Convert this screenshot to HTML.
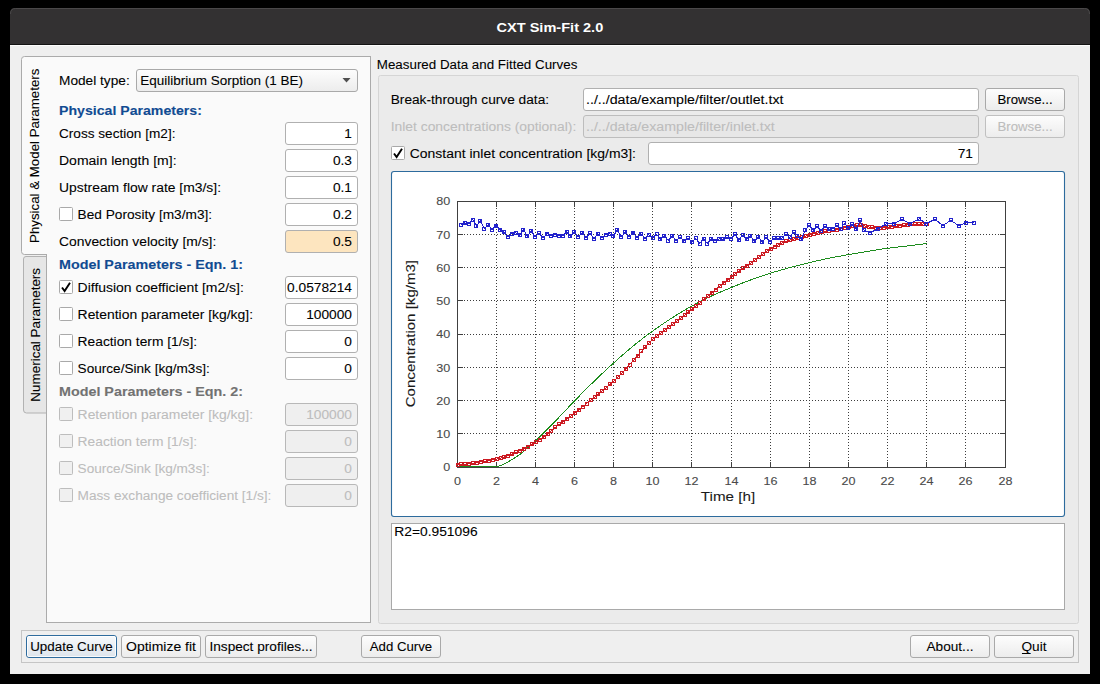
<!DOCTYPE html>
<html><head><meta charset="utf-8"><title>CXT Sim-Fit 2.0</title>
<style>html,body{margin:0;padding:0;background:#000;width:1100px;height:684px;overflow:hidden}svg{display:block}text{font-family:"Liberation Sans",sans-serif}</style>
</head><body>
<svg width="1100" height="684" viewBox="0 0 1100 684" font-family="Liberation Sans, sans-serif"><rect x="0" y="0" width="1100" height="684" fill="#000"/>
<rect x="10" y="40" width="1080" height="634" fill="#efefef"/>
<path d="M10,44 L10,13 Q10,8 15,8 L1085,8 Q1090,8 1090,13 L1090,44 Z" fill="#333132"/>
<path d="M10.5,14 Q10.5,8.5 15.5,8.5 L1084.5,8.5 Q1089.5,8.5 1089.5,14" fill="none" stroke="#4a4849" stroke-width="1"/>
<rect x="10" y="44" width="1080" height="1" fill="#141414"/>
<rect x="10" y="45" width="1080" height="1" fill="#fdfdfd"/>
<text x="496.53" y="32.00" font-size="13.40" font-weight="bold" fill="#ffffff" textLength="106.75" lengthAdjust="spacingAndGlyphs">CXT Sim-Fit 2.0</text>
<path d="M46,256.5 L26,256.5 Q23.5,256.5 23.5,259 L23.5,410 Q23.5,413 26.5,413 L46,413" fill="#e6e6e6" stroke="#b2b2b2" stroke-width="1"/>
<rect x="46.5" y="56.5" width="324" height="566" fill="#fafafa" stroke="#ababab" stroke-width="1"/>
<path d="M47,56.5 L24.5,56.5 Q21.5,56.5 21.5,59.5 L21.5,251.5 Q21.5,254.5 24.5,254.5 L47,254.5" fill="#fafafa" stroke="#ababab" stroke-width="1"/>
<rect x="46" y="57" width="2" height="197" fill="#fafafa"/>
<text x="-48.16" y="155.80" font-size="12.24" fill="#000" stroke="#000" stroke-width="0.08" textLength="174.33" lengthAdjust="spacingAndGlyphs" transform="rotate(-90 39.00 155.80)">Physical &amp; Model Parameters</text>
<text x="-26.85" y="334.80" font-size="12.24" fill="#000" stroke="#000" stroke-width="0.08" textLength="133.71" lengthAdjust="spacingAndGlyphs" transform="rotate(-90 40.00 334.80)">Numerical Parameters</text>
<text x="59.00" y="85.00" font-size="12.24" fill="#000" stroke="#000" stroke-width="0.08" textLength="70.69" lengthAdjust="spacingAndGlyphs">Model type:</text>
<defs><linearGradient id="btn" x1="0" y1="0" x2="0" y2="1"><stop offset="0" stop-color="#fdfdfd"/><stop offset="1" stop-color="#ececec"/></linearGradient><linearGradient id="btnd" x1="0" y1="0" x2="0" y2="1"><stop offset="0" stop-color="#f8fafc"/><stop offset="1" stop-color="#dde4eb"/></linearGradient></defs>
<rect x="136.5" y="69.5" width="221" height="22" rx="2.5" fill="url(#btn)" stroke="#a9a9a9" stroke-width="1"/>
<text x="140.30" y="85.00" font-size="12.24" fill="#000" stroke="#000" stroke-width="0.08" textLength="162.74" lengthAdjust="spacingAndGlyphs">Equilibrium Sorption (1 BE)</text>
<path d="M342.5,78 L350.5,78 L346.5,82.5 Z" fill="#505050"/>
<text x="59.00" y="115.00" font-size="12.24" font-weight="bold" fill="#114b92" stroke="#114b92" stroke-width="0.1" textLength="142.88" lengthAdjust="spacingAndGlyphs">Physical Parameters:</text>
<text x="59.00" y="138.00" font-size="12.24" fill="#000" stroke="#000" stroke-width="0.08" textLength="116.47" lengthAdjust="spacingAndGlyphs">Cross section [m2]:</text>
<rect x="285.5" y="122.5" width="72" height="22" rx="2.5" fill="#ffffff" stroke="#b0b0b0" stroke-width="1"/><text x="344.37" y="138.00" font-size="12.24" fill="#000" stroke="#000" stroke-width="0.08" textLength="7.63" lengthAdjust="spacingAndGlyphs">1</text>
<text x="59.00" y="165.00" font-size="12.24" fill="#000" stroke="#000" stroke-width="0.08" textLength="117.54" lengthAdjust="spacingAndGlyphs">Domain length [m]:</text>
<rect x="285.5" y="149.5" width="72" height="22" rx="2.5" fill="#ffffff" stroke="#b0b0b0" stroke-width="1"/><text x="332.92" y="165.00" font-size="12.24" fill="#000" stroke="#000" stroke-width="0.08" textLength="19.08" lengthAdjust="spacingAndGlyphs">0.3</text>
<text x="59.00" y="192.00" font-size="12.24" fill="#000" stroke="#000" stroke-width="0.08" textLength="162.01" lengthAdjust="spacingAndGlyphs">Upstream flow rate [m3/s]:</text>
<rect x="285.5" y="176.5" width="72" height="22" rx="2.5" fill="#ffffff" stroke="#b0b0b0" stroke-width="1"/><text x="332.92" y="192.00" font-size="12.24" fill="#000" stroke="#000" stroke-width="0.08" textLength="19.08" lengthAdjust="spacingAndGlyphs">0.1</text>
<rect x="59.5" y="207.5" width="13" height="13" rx="1" fill="#ffffff" stroke="#a9a9a9" stroke-width="1"/>
<text x="77.60" y="219.00" font-size="12.24" fill="#000" stroke="#000" stroke-width="0.08" textLength="134.51" lengthAdjust="spacingAndGlyphs">Bed Porosity [m3/m3]:</text>
<rect x="285.5" y="203.5" width="72" height="22" rx="2.5" fill="#ffffff" stroke="#b0b0b0" stroke-width="1"/><text x="332.92" y="219.00" font-size="12.24" fill="#000" stroke="#000" stroke-width="0.08" textLength="19.08" lengthAdjust="spacingAndGlyphs">0.2</text>
<text x="59.00" y="246.00" font-size="12.24" fill="#000" stroke="#000" stroke-width="0.08" textLength="157.31" lengthAdjust="spacingAndGlyphs">Convection velocity [m/s]:</text>
<rect x="285.5" y="230.5" width="72" height="22" rx="2.5" fill="#fde5bf" stroke="#b0b0b0" stroke-width="1"/><text x="332.92" y="246.00" font-size="12.24" fill="#000" stroke="#000" stroke-width="0.08" textLength="19.08" lengthAdjust="spacingAndGlyphs">0.5</text>
<text x="59.00" y="269.00" font-size="12.24" font-weight="bold" fill="#114b92" stroke="#114b92" stroke-width="0.1" textLength="183.92" lengthAdjust="spacingAndGlyphs">Model Parameters - Eqn. 1:</text>
<rect x="59.5" y="280.5" width="13" height="13" rx="1" fill="#ffffff" stroke="#a9a9a9" stroke-width="1"/><path d="M62,287.5 L64.6,291 L70,282.8" fill="none" stroke="#000" stroke-width="1.9" stroke-linecap="butt" stroke-linejoin="miter"/>
<text x="77.60" y="292.00" font-size="12.24" fill="#000" stroke="#000" stroke-width="0.08" textLength="166.18" lengthAdjust="spacingAndGlyphs">Diffusion coefficient [m2/s]:</text>
<rect x="285.5" y="276.5" width="72" height="22" rx="2.5" fill="#ffffff" stroke="#b0b0b0" stroke-width="1"/><text x="287.11" y="292.00" font-size="12.24" fill="#000" stroke="#000" stroke-width="0.08" textLength="64.89" lengthAdjust="spacingAndGlyphs">0.0578214</text>
<rect x="59.5" y="307.5" width="13" height="13" rx="1" fill="#ffffff" stroke="#a9a9a9" stroke-width="1"/>
<text x="77.60" y="319.00" font-size="12.24" fill="#000" stroke="#000" stroke-width="0.08" textLength="175.43" lengthAdjust="spacingAndGlyphs">Retention parameter [kg/kg]:</text>
<rect x="285.5" y="303.5" width="72" height="22" rx="2.5" fill="#ffffff" stroke="#b0b0b0" stroke-width="1"/><text x="306.19" y="319.00" font-size="12.24" fill="#000" stroke="#000" stroke-width="0.08" textLength="45.81" lengthAdjust="spacingAndGlyphs">100000</text>
<rect x="59.5" y="334.5" width="13" height="13" rx="1" fill="#ffffff" stroke="#a9a9a9" stroke-width="1"/>
<text x="77.60" y="346.00" font-size="12.24" fill="#000" stroke="#000" stroke-width="0.08" textLength="119.58" lengthAdjust="spacingAndGlyphs">Reaction term [1/s]:</text>
<rect x="285.5" y="330.5" width="72" height="22" rx="2.5" fill="#ffffff" stroke="#b0b0b0" stroke-width="1"/><text x="344.37" y="346.00" font-size="12.24" fill="#000" stroke="#000" stroke-width="0.08" textLength="7.63" lengthAdjust="spacingAndGlyphs">0</text>
<rect x="59.5" y="361.5" width="13" height="13" rx="1" fill="#ffffff" stroke="#a9a9a9" stroke-width="1"/>
<text x="77.60" y="373.00" font-size="12.24" fill="#000" stroke="#000" stroke-width="0.08" textLength="132.17" lengthAdjust="spacingAndGlyphs">Source/Sink [kg/m3s]:</text>
<rect x="285.5" y="357.5" width="72" height="22" rx="2.5" fill="#ffffff" stroke="#b0b0b0" stroke-width="1"/><text x="344.37" y="373.00" font-size="12.24" fill="#000" stroke="#000" stroke-width="0.08" textLength="7.63" lengthAdjust="spacingAndGlyphs">0</text>
<text x="59.00" y="396.00" font-size="12.24" font-weight="bold" fill="#727272" stroke="#727272" stroke-width="0.1" textLength="183.92" lengthAdjust="spacingAndGlyphs">Model Parameters - Eqn. 2:</text>
<rect x="59.5" y="407.5" width="13" height="13" rx="1" fill="#f0f0f0" stroke="#bdbdbd" stroke-width="1"/>
<text x="77.60" y="419.00" font-size="12.24" fill="#bdbdbd" stroke="#bdbdbd" stroke-width="0.08" textLength="175.43" lengthAdjust="spacingAndGlyphs">Retention parameter [kg/kg]:</text>
<rect x="285.5" y="403.5" width="72" height="22" rx="2.5" fill="#efefef" stroke="#b8b8b8" stroke-width="1"/><text x="306.19" y="419.00" font-size="12.24" fill="#bdbdbd" stroke="#bdbdbd" stroke-width="0.08" textLength="45.81" lengthAdjust="spacingAndGlyphs">100000</text>
<rect x="59.5" y="434.5" width="13" height="13" rx="1" fill="#f0f0f0" stroke="#bdbdbd" stroke-width="1"/>
<text x="77.60" y="446.00" font-size="12.24" fill="#bdbdbd" stroke="#bdbdbd" stroke-width="0.08" textLength="119.58" lengthAdjust="spacingAndGlyphs">Reaction term [1/s]:</text>
<rect x="285.5" y="430.5" width="72" height="22" rx="2.5" fill="#efefef" stroke="#b8b8b8" stroke-width="1"/><text x="344.37" y="446.00" font-size="12.24" fill="#bdbdbd" stroke="#bdbdbd" stroke-width="0.08" textLength="7.63" lengthAdjust="spacingAndGlyphs">0</text>
<rect x="59.5" y="461.5" width="13" height="13" rx="1" fill="#f0f0f0" stroke="#bdbdbd" stroke-width="1"/>
<text x="77.60" y="473.00" font-size="12.24" fill="#bdbdbd" stroke="#bdbdbd" stroke-width="0.08" textLength="132.17" lengthAdjust="spacingAndGlyphs">Source/Sink [kg/m3s]:</text>
<rect x="285.5" y="457.5" width="72" height="22" rx="2.5" fill="#efefef" stroke="#b8b8b8" stroke-width="1"/><text x="344.37" y="473.00" font-size="12.24" fill="#bdbdbd" stroke="#bdbdbd" stroke-width="0.08" textLength="7.63" lengthAdjust="spacingAndGlyphs">0</text>
<rect x="59.5" y="488.5" width="13" height="13" rx="1" fill="#f0f0f0" stroke="#bdbdbd" stroke-width="1"/>
<text x="77.60" y="500.00" font-size="12.24" fill="#bdbdbd" stroke="#bdbdbd" stroke-width="0.08" textLength="193.76" lengthAdjust="spacingAndGlyphs">Mass exchange coefficient [1/s]:</text>
<rect x="285.5" y="484.5" width="72" height="22" rx="2.5" fill="#efefef" stroke="#b8b8b8" stroke-width="1"/><text x="344.37" y="500.00" font-size="12.24" fill="#bdbdbd" stroke="#bdbdbd" stroke-width="0.08" textLength="7.63" lengthAdjust="spacingAndGlyphs">0</text>
<text x="376.80" y="69.00" font-size="12.24" fill="#000" stroke="#000" stroke-width="0.08" textLength="200.53" lengthAdjust="spacingAndGlyphs">Measured Data and Fitted Curves</text>
<rect x="378.5" y="75.5" width="700" height="548" rx="2" fill="#ebebeb" stroke="#d5d5d5" stroke-width="1"/>
<text x="390.70" y="104.00" font-size="12.24" fill="#000" stroke="#000" stroke-width="0.08" textLength="158.39" lengthAdjust="spacingAndGlyphs">Break-through curve data:</text>
<text x="390.70" y="131.00" font-size="12.24" fill="#bdbdbd" stroke="#bdbdbd" stroke-width="0.08" textLength="185.60" lengthAdjust="spacingAndGlyphs">Inlet concentrations (optional):</text>
<rect x="583.5" y="88.5" width="395" height="22" rx="2.5" fill="#ffffff" stroke="#b0b0b0" stroke-width="1"/><text x="586.00" y="104.00" font-size="12.24" fill="#000" stroke="#000" stroke-width="0.08" textLength="197.47" lengthAdjust="spacingAndGlyphs">../../data/example/filter/outlet.txt</text>
<rect x="583.5" y="115.5" width="395" height="22" rx="2.5" fill="#e7e7e7" stroke="#bdbdbd" stroke-width="1"/><text x="586.00" y="131.00" font-size="12.24" fill="#bdbdbd" stroke="#bdbdbd" stroke-width="0.08" textLength="188.76" lengthAdjust="spacingAndGlyphs">../../data/example/filter/inlet.txt</text>
<rect x="985.5" y="88.5" width="79" height="22" rx="2.5" fill="url(#btn)" stroke="#a9a9a9" stroke-width="1"/><text x="997.43" y="104.00" font-size="12.24" fill="#000" stroke="#000" stroke-width="0.08" textLength="55.14" lengthAdjust="spacingAndGlyphs">Browse...</text>
<rect x="985.5" y="115.5" width="79" height="22" rx="2.5" fill="url(#btn)" stroke="#c0c0c0" stroke-width="1"/><text x="997.43" y="131.00" font-size="12.24" fill="#bcbcbc" stroke="#bcbcbc" stroke-width="0.08" textLength="55.14" lengthAdjust="spacingAndGlyphs">Browse...</text>
<rect x="391.5" y="146.5" width="13" height="13" rx="1" fill="#ffffff" stroke="#a9a9a9" stroke-width="1"/><path d="M394,153.5 L396.6,157 L402,148.8" fill="none" stroke="#000" stroke-width="1.9" stroke-linecap="butt" stroke-linejoin="miter"/>
<text x="409.80" y="158.00" font-size="12.24" fill="#000" stroke="#000" stroke-width="0.08" textLength="226.20" lengthAdjust="spacingAndGlyphs">Constant inlet concentration [kg/m3]:</text>
<rect x="648.5" y="142.5" width="330" height="22" rx="2.5" fill="#ffffff" stroke="#b0b0b0" stroke-width="1"/><text x="957.73" y="158.00" font-size="12.24" fill="#000" stroke="#000" stroke-width="0.08" textLength="15.27" lengthAdjust="spacingAndGlyphs">71</text>
<rect x="391.5" y="171.5" width="673" height="345" rx="2.5" fill="#ffffff" stroke="#2d6b9d" stroke-width="1.1"/>
<rect x="391.5" y="523.5" width="673" height="86" fill="#ffffff" stroke="#a9a9a9" stroke-width="1"/>
<text x="394.30" y="536.00" font-size="12.24" fill="#000" stroke="#000" stroke-width="0.08" textLength="83.29" lengthAdjust="spacingAndGlyphs">R2=0.951096</text>
<rect x="21.5" y="630.5" width="1057" height="32" fill="none" stroke="#c5c5c5" stroke-width="1"/>
<rect x="26.5" y="635.5" width="90" height="22" rx="2.5" fill="url(#btnd)" stroke="#2f6c9e" stroke-width="1"/><rect x="27.5" y="636.5" width="88" height="20" rx="1.5" fill="none" stroke="#ffffff" stroke-width="1" opacity="0.8"/><text x="30.16" y="651.00" font-size="12.24" fill="#000" stroke="#000" stroke-width="0.08" textLength="82.68" lengthAdjust="spacingAndGlyphs">Update Curve</text>
<rect x="121.5" y="635.5" width="79" height="22" rx="2.5" fill="url(#btn)" stroke="#a9a9a9" stroke-width="1"/><text x="126.06" y="651.00" font-size="12.24" fill="#000" stroke="#000" stroke-width="0.08" textLength="69.89" lengthAdjust="spacingAndGlyphs">Optimize fit</text>
<rect x="205.5" y="635.5" width="111" height="22" rx="2.5" fill="url(#btn)" stroke="#a9a9a9" stroke-width="1"/><text x="209.44" y="651.00" font-size="12.24" fill="#000" stroke="#000" stroke-width="0.08" textLength="103.11" lengthAdjust="spacingAndGlyphs">Inspect profiles...</text>
<rect x="361.5" y="635.5" width="79" height="22" rx="2.5" fill="url(#btn)" stroke="#a9a9a9" stroke-width="1"/><text x="369.78" y="651.00" font-size="12.24" fill="#000" stroke="#000" stroke-width="0.08" textLength="62.45" lengthAdjust="spacingAndGlyphs">Add Curve</text>
<rect x="910.5" y="635.5" width="79" height="22" rx="2.5" fill="url(#btn)" stroke="#a9a9a9" stroke-width="1"/><text x="926.54" y="651.00" font-size="12.24" fill="#000" stroke="#000" stroke-width="0.08" textLength="46.92" lengthAdjust="spacingAndGlyphs">About...</text>
<rect x="994.5" y="635.5" width="79" height="22" rx="2.5" fill="url(#btn)" stroke="#a9a9a9" stroke-width="1"/><text x="1021.46" y="651.00" font-size="12.24" fill="#000" stroke="#000" stroke-width="0.08" textLength="25.09" lengthAdjust="spacingAndGlyphs">Quit</text>
<rect x="1021.96" y="653" width="8.45" height="1" fill="#000"/>
<g shape-rendering="crispEdges"><line x1="496.5" y1="202" x2="496.5" y2="467" stroke="#3c3c3c" stroke-width="1" stroke-dasharray="1 2"/><line x1="535.5" y1="202" x2="535.5" y2="467" stroke="#3c3c3c" stroke-width="1" stroke-dasharray="1 2"/><line x1="574.5" y1="202" x2="574.5" y2="467" stroke="#3c3c3c" stroke-width="1" stroke-dasharray="1 2"/><line x1="613.5" y1="202" x2="613.5" y2="467" stroke="#3c3c3c" stroke-width="1" stroke-dasharray="1 2"/><line x1="652.5" y1="202" x2="652.5" y2="467" stroke="#3c3c3c" stroke-width="1" stroke-dasharray="1 2"/><line x1="691.5" y1="202" x2="691.5" y2="467" stroke="#3c3c3c" stroke-width="1" stroke-dasharray="1 2"/><line x1="731.5" y1="202" x2="731.5" y2="467" stroke="#3c3c3c" stroke-width="1" stroke-dasharray="1 2"/><line x1="770.5" y1="202" x2="770.5" y2="467" stroke="#3c3c3c" stroke-width="1" stroke-dasharray="1 2"/><line x1="809.5" y1="202" x2="809.5" y2="467" stroke="#3c3c3c" stroke-width="1" stroke-dasharray="1 2"/><line x1="848.5" y1="202" x2="848.5" y2="467" stroke="#3c3c3c" stroke-width="1" stroke-dasharray="1 2"/><line x1="887.5" y1="202" x2="887.5" y2="467" stroke="#3c3c3c" stroke-width="1" stroke-dasharray="1 2"/><line x1="926.5" y1="202" x2="926.5" y2="467" stroke="#3c3c3c" stroke-width="1" stroke-dasharray="1 2"/><line x1="965.5" y1="202" x2="965.5" y2="467" stroke="#3c3c3c" stroke-width="1" stroke-dasharray="1 2"/><line x1="458" y1="433.5" x2="1005" y2="433.5" stroke="#3c3c3c" stroke-width="1" stroke-dasharray="1 2"/><line x1="458" y1="400.5" x2="1005" y2="400.5" stroke="#3c3c3c" stroke-width="1" stroke-dasharray="1 2"/><line x1="458" y1="367.5" x2="1005" y2="367.5" stroke="#3c3c3c" stroke-width="1" stroke-dasharray="1 2"/><line x1="458" y1="334.5" x2="1005" y2="334.5" stroke="#3c3c3c" stroke-width="1" stroke-dasharray="1 2"/><line x1="458" y1="300.5" x2="1005" y2="300.5" stroke="#3c3c3c" stroke-width="1" stroke-dasharray="1 2"/><line x1="458" y1="267.5" x2="1005" y2="267.5" stroke="#3c3c3c" stroke-width="1" stroke-dasharray="1 2"/><line x1="458" y1="234.5" x2="1005" y2="234.5" stroke="#3c3c3c" stroke-width="1" stroke-dasharray="1 2"/><line x1="496.5" y1="467" x2="496.5" y2="462" stroke="#404040" stroke-width="1"/><line x1="496.5" y1="202" x2="496.5" y2="207" stroke="#404040" stroke-width="1"/><line x1="535.5" y1="467" x2="535.5" y2="462" stroke="#404040" stroke-width="1"/><line x1="535.5" y1="202" x2="535.5" y2="207" stroke="#404040" stroke-width="1"/><line x1="574.5" y1="467" x2="574.5" y2="462" stroke="#404040" stroke-width="1"/><line x1="574.5" y1="202" x2="574.5" y2="207" stroke="#404040" stroke-width="1"/><line x1="613.5" y1="467" x2="613.5" y2="462" stroke="#404040" stroke-width="1"/><line x1="613.5" y1="202" x2="613.5" y2="207" stroke="#404040" stroke-width="1"/><line x1="652.5" y1="467" x2="652.5" y2="462" stroke="#404040" stroke-width="1"/><line x1="652.5" y1="202" x2="652.5" y2="207" stroke="#404040" stroke-width="1"/><line x1="691.5" y1="467" x2="691.5" y2="462" stroke="#404040" stroke-width="1"/><line x1="691.5" y1="202" x2="691.5" y2="207" stroke="#404040" stroke-width="1"/><line x1="731.5" y1="467" x2="731.5" y2="462" stroke="#404040" stroke-width="1"/><line x1="731.5" y1="202" x2="731.5" y2="207" stroke="#404040" stroke-width="1"/><line x1="770.5" y1="467" x2="770.5" y2="462" stroke="#404040" stroke-width="1"/><line x1="770.5" y1="202" x2="770.5" y2="207" stroke="#404040" stroke-width="1"/><line x1="809.5" y1="467" x2="809.5" y2="462" stroke="#404040" stroke-width="1"/><line x1="809.5" y1="202" x2="809.5" y2="207" stroke="#404040" stroke-width="1"/><line x1="848.5" y1="467" x2="848.5" y2="462" stroke="#404040" stroke-width="1"/><line x1="848.5" y1="202" x2="848.5" y2="207" stroke="#404040" stroke-width="1"/><line x1="887.5" y1="467" x2="887.5" y2="462" stroke="#404040" stroke-width="1"/><line x1="887.5" y1="202" x2="887.5" y2="207" stroke="#404040" stroke-width="1"/><line x1="926.5" y1="467" x2="926.5" y2="462" stroke="#404040" stroke-width="1"/><line x1="926.5" y1="202" x2="926.5" y2="207" stroke="#404040" stroke-width="1"/><line x1="965.5" y1="467" x2="965.5" y2="462" stroke="#404040" stroke-width="1"/><line x1="965.5" y1="202" x2="965.5" y2="207" stroke="#404040" stroke-width="1"/><line x1="458" y1="433.5" x2="463" y2="433.5" stroke="#404040" stroke-width="1"/><line x1="1005" y1="433.5" x2="1000" y2="433.5" stroke="#404040" stroke-width="1"/><line x1="458" y1="400.5" x2="463" y2="400.5" stroke="#404040" stroke-width="1"/><line x1="1005" y1="400.5" x2="1000" y2="400.5" stroke="#404040" stroke-width="1"/><line x1="458" y1="367.5" x2="463" y2="367.5" stroke="#404040" stroke-width="1"/><line x1="1005" y1="367.5" x2="1000" y2="367.5" stroke="#404040" stroke-width="1"/><line x1="458" y1="334.5" x2="463" y2="334.5" stroke="#404040" stroke-width="1"/><line x1="1005" y1="334.5" x2="1000" y2="334.5" stroke="#404040" stroke-width="1"/><line x1="458" y1="300.5" x2="463" y2="300.5" stroke="#404040" stroke-width="1"/><line x1="1005" y1="300.5" x2="1000" y2="300.5" stroke="#404040" stroke-width="1"/><line x1="458" y1="267.5" x2="463" y2="267.5" stroke="#404040" stroke-width="1"/><line x1="1005" y1="267.5" x2="1000" y2="267.5" stroke="#404040" stroke-width="1"/><line x1="458" y1="234.5" x2="463" y2="234.5" stroke="#404040" stroke-width="1"/><line x1="1005" y1="234.5" x2="1000" y2="234.5" stroke="#404040" stroke-width="1"/><rect x="457.5" y="201.5" width="548" height="266" fill="none" stroke="#404040" stroke-width="1"/></g>
<text x="454.00" y="485.00" font-size="11.22" fill="#4a4a4a" stroke="#4a4a4a" stroke-width="0.1" textLength="7.00" lengthAdjust="spacingAndGlyphs">0</text>
<text x="493.00" y="485.00" font-size="11.22" fill="#4a4a4a" stroke="#4a4a4a" stroke-width="0.1" textLength="7.00" lengthAdjust="spacingAndGlyphs">2</text>
<text x="532.00" y="485.00" font-size="11.22" fill="#4a4a4a" stroke="#4a4a4a" stroke-width="0.1" textLength="7.00" lengthAdjust="spacingAndGlyphs">4</text>
<text x="571.00" y="485.00" font-size="11.22" fill="#4a4a4a" stroke="#4a4a4a" stroke-width="0.1" textLength="7.00" lengthAdjust="spacingAndGlyphs">6</text>
<text x="610.00" y="485.00" font-size="11.22" fill="#4a4a4a" stroke="#4a4a4a" stroke-width="0.1" textLength="7.00" lengthAdjust="spacingAndGlyphs">8</text>
<text x="645.50" y="485.00" font-size="11.22" fill="#4a4a4a" stroke="#4a4a4a" stroke-width="0.1" textLength="14.00" lengthAdjust="spacingAndGlyphs">10</text>
<text x="684.50" y="485.00" font-size="11.22" fill="#4a4a4a" stroke="#4a4a4a" stroke-width="0.1" textLength="14.00" lengthAdjust="spacingAndGlyphs">12</text>
<text x="724.50" y="485.00" font-size="11.22" fill="#4a4a4a" stroke="#4a4a4a" stroke-width="0.1" textLength="14.00" lengthAdjust="spacingAndGlyphs">14</text>
<text x="763.50" y="485.00" font-size="11.22" fill="#4a4a4a" stroke="#4a4a4a" stroke-width="0.1" textLength="14.00" lengthAdjust="spacingAndGlyphs">16</text>
<text x="802.50" y="485.00" font-size="11.22" fill="#4a4a4a" stroke="#4a4a4a" stroke-width="0.1" textLength="14.00" lengthAdjust="spacingAndGlyphs">18</text>
<text x="841.50" y="485.00" font-size="11.22" fill="#4a4a4a" stroke="#4a4a4a" stroke-width="0.1" textLength="14.00" lengthAdjust="spacingAndGlyphs">20</text>
<text x="880.50" y="485.00" font-size="11.22" fill="#4a4a4a" stroke="#4a4a4a" stroke-width="0.1" textLength="14.00" lengthAdjust="spacingAndGlyphs">22</text>
<text x="919.50" y="485.00" font-size="11.22" fill="#4a4a4a" stroke="#4a4a4a" stroke-width="0.1" textLength="14.00" lengthAdjust="spacingAndGlyphs">24</text>
<text x="958.50" y="485.00" font-size="11.22" fill="#4a4a4a" stroke="#4a4a4a" stroke-width="0.1" textLength="14.00" lengthAdjust="spacingAndGlyphs">26</text>
<text x="998.50" y="485.00" font-size="11.22" fill="#4a4a4a" stroke="#4a4a4a" stroke-width="0.1" textLength="14.00" lengthAdjust="spacingAndGlyphs">28</text>
<text x="443.20" y="471.30" font-size="11.22" fill="#4a4a4a" stroke="#4a4a4a" stroke-width="0.1" textLength="7.00" lengthAdjust="spacingAndGlyphs">0</text>
<text x="436.20" y="438.05" font-size="11.22" fill="#4a4a4a" stroke="#4a4a4a" stroke-width="0.1" textLength="14.00" lengthAdjust="spacingAndGlyphs">10</text>
<text x="436.20" y="404.80" font-size="11.22" fill="#4a4a4a" stroke="#4a4a4a" stroke-width="0.1" textLength="14.00" lengthAdjust="spacingAndGlyphs">20</text>
<text x="436.20" y="371.55" font-size="11.22" fill="#4a4a4a" stroke="#4a4a4a" stroke-width="0.1" textLength="14.00" lengthAdjust="spacingAndGlyphs">30</text>
<text x="436.20" y="338.30" font-size="11.22" fill="#4a4a4a" stroke="#4a4a4a" stroke-width="0.1" textLength="14.00" lengthAdjust="spacingAndGlyphs">40</text>
<text x="436.20" y="305.05" font-size="11.22" fill="#4a4a4a" stroke="#4a4a4a" stroke-width="0.1" textLength="14.00" lengthAdjust="spacingAndGlyphs">50</text>
<text x="436.20" y="271.80" font-size="11.22" fill="#4a4a4a" stroke="#4a4a4a" stroke-width="0.1" textLength="14.00" lengthAdjust="spacingAndGlyphs">60</text>
<text x="436.20" y="238.55" font-size="11.22" fill="#4a4a4a" stroke="#4a4a4a" stroke-width="0.1" textLength="14.00" lengthAdjust="spacingAndGlyphs">70</text>
<text x="436.20" y="205.30" font-size="11.22" fill="#4a4a4a" stroke="#4a4a4a" stroke-width="0.1" textLength="14.00" lengthAdjust="spacingAndGlyphs">80</text>
<text x="700.84" y="501.00" font-size="13.26" fill="#1a1a1a" stroke="#1a1a1a" stroke-width="0.08" textLength="54.33" lengthAdjust="spacingAndGlyphs">Time [h]</text>
<text x="340.93" y="333.60" font-size="13.26" fill="#1a1a1a" stroke="#1a1a1a" stroke-width="0.08" textLength="147.34" lengthAdjust="spacingAndGlyphs" transform="rotate(-90 414.60 333.60)">Concentration [kg/m3]</text>
<polyline points="457.50,466.50 459.46,466.50 461.41,466.50 463.37,466.50 465.33,466.50 467.29,466.50 469.24,466.50 471.20,466.50 473.16,466.50 475.11,466.50 477.07,466.50 479.03,466.50 480.99,466.50 482.94,466.50 484.90,466.50 486.86,466.50 488.81,466.50 490.77,466.50 492.73,466.50 494.69,466.50 496.64,466.50 498.60,466.22 500.56,465.52 502.51,464.60 504.47,463.68 506.43,462.74 508.39,461.67 510.34,460.53 512.30,459.35 514.26,458.16 516.21,456.92 518.17,455.61 520.13,454.20 522.09,452.62 524.04,450.90 526.00,449.12 527.96,447.38 529.91,445.73 531.87,444.11 533.83,442.46 535.79,440.73 537.74,438.90 539.70,436.99 541.66,435.04 543.61,433.08 545.57,431.13 547.53,429.15 549.49,427.16 551.44,425.15 553.40,423.14 555.36,421.12 557.31,419.08 559.27,417.02 561.23,414.95 563.19,412.87 565.14,410.79 567.10,408.71 569.06,406.63 571.01,404.57 572.97,402.52 574.93,400.50 576.89,398.49 578.84,396.49 580.80,394.50 582.76,392.52 584.71,390.54 586.67,388.58 588.63,386.64 590.59,384.70 592.54,382.78 594.50,380.88 596.46,379.00 598.41,377.12 600.37,375.26 602.33,373.41 604.29,371.57 606.24,369.75 608.20,367.94 610.16,366.14 612.11,364.36 614.07,362.60 616.03,360.84 617.99,359.09 619.94,357.35 621.90,355.62 623.86,353.90 625.81,352.21 627.77,350.53 629.73,348.87 631.69,347.24 633.64,345.64 635.60,344.06 637.56,342.50 639.51,340.96 641.47,339.43 643.43,337.93 645.39,336.44 647.34,334.98 649.30,333.52 651.26,332.09 653.21,330.67 655.17,329.27 657.13,327.89 659.09,326.51 661.04,325.16 663.00,323.82 664.96,322.49 666.91,321.19 668.87,319.90 670.83,318.63 672.79,317.38 674.74,316.14 676.70,314.92 678.66,313.71 680.61,312.52 682.57,311.35 684.53,310.19 686.49,309.05 688.44,307.93 690.40,306.82 692.36,305.74 694.31,304.67 696.27,303.62 698.23,302.58 700.19,301.55 702.14,300.54 704.10,299.55 706.06,298.57 708.01,297.62 709.97,296.68 711.93,295.76 713.89,294.87 715.84,293.99 717.80,293.14 719.76,292.30 721.71,291.47 723.67,290.65 725.63,289.85 727.59,289.04 729.54,288.25 731.50,287.45 733.46,286.65 735.41,285.86 737.37,285.08 739.33,284.29 741.29,283.52 743.24,282.75 745.20,282.00 747.16,281.25 749.11,280.52 751.07,279.80 753.03,279.10 754.99,278.40 756.94,277.71 758.90,277.02 760.86,276.35 762.81,275.69 764.77,275.04 766.73,274.40 768.69,273.77 770.64,273.15 772.60,272.55 774.56,271.95 776.51,271.37 778.47,270.79 780.43,270.22 782.39,269.67 784.34,269.11 786.30,268.57 788.26,268.03 790.21,267.50 792.17,266.97 794.13,266.45 796.09,265.94 798.04,265.43 800.00,264.92 801.96,264.43 803.91,263.94 805.87,263.45 807.83,262.98 809.79,262.51 811.74,262.05 813.70,261.60 815.66,261.15 817.61,260.70 819.57,260.27 821.53,259.84 823.49,259.41 825.44,259.00 827.40,258.59 829.36,258.19 831.31,257.80 833.27,257.41 835.23,257.04 837.19,256.67 839.14,256.30 841.10,255.94 843.06,255.58 845.01,255.23 846.97,254.88 848.93,254.53 850.89,254.19 852.84,253.84 854.80,253.50 856.76,253.16 858.71,252.83 860.67,252.50 862.63,252.17 864.59,251.85 866.54,251.52 868.50,251.21 870.46,250.89 872.41,250.58 874.37,250.26 876.33,249.95 878.29,249.64 880.24,249.34 882.20,249.05 884.16,248.76 886.11,248.48 888.07,248.22 890.03,247.96 891.99,247.71 893.94,247.47 895.90,247.24 897.86,247.01 899.81,246.79 901.77,246.57 903.73,246.34 905.69,246.12 907.64,245.89 909.60,245.65 911.56,245.42 913.51,245.19 915.47,244.96 917.43,244.72 919.39,244.49 921.34,244.26 923.30,244.03 925.26,243.79 927.21,243.56" fill="none" stroke="#1d8c1d" stroke-width="1" shape-rendering="crispEdges"/>
<polyline points="457.50,464.67 461.41,464.49 465.33,464.19 469.24,463.78 473.16,463.18 477.07,462.51 480.99,461.86 484.90,461.18 488.81,460.53 492.73,459.91 496.64,459.19 500.56,458.21 504.47,457.01 508.39,455.66 512.30,454.08 516.21,452.37 520.13,450.60 524.04,448.72 527.96,446.67 531.87,444.44 535.79,442.06 539.70,439.54 543.61,436.84 547.53,433.90 551.44,430.65 555.36,427.43 559.27,424.43 563.19,421.52 567.10,418.66 571.01,415.77 574.93,412.80 578.84,409.75 582.76,406.66 586.67,403.52 590.59,400.36 594.50,397.18 598.41,394.02 602.33,390.89 606.24,387.71 610.16,384.40 614.07,380.88 617.99,377.08 621.90,373.02 625.81,368.79 629.73,364.51 633.64,360.27 637.56,355.93 641.47,351.43 645.39,346.96 649.30,342.75 653.21,338.99 657.13,335.73 661.04,332.78 664.96,330.00 668.87,327.24 672.79,324.36 676.70,321.36 680.61,318.33 684.53,315.28 688.44,312.19 692.36,309.06 696.27,305.86 700.19,302.60 704.10,299.31 708.01,296.02 711.93,292.77 715.84,289.52 719.76,286.26 723.67,283.02 727.59,279.86 731.50,276.81 735.41,273.90 739.33,271.09 743.24,268.34 747.16,265.61 751.07,262.85 754.99,259.95 758.90,256.97 762.81,254.03 766.73,251.28 770.64,248.88 774.56,246.74 778.47,244.71 782.39,242.87 786.30,241.24 790.21,239.90 794.13,238.90 798.04,238.04 801.96,237.06 805.87,235.97 809.79,234.91 813.70,233.94 817.61,233.03 821.53,232.16 825.44,231.32 829.36,230.59 833.27,230.06 837.19,229.58 841.10,228.82 845.01,227.66 848.93,226.60 852.84,225.72 856.76,225.05 860.67,225.08 864.59,225.93 868.50,226.94 872.41,227.50 876.33,227.87 880.24,227.89 884.16,227.63 888.07,227.27 891.99,226.79 895.90,226.20 899.81,225.69 903.73,225.18 907.64,224.75 911.56,224.49 915.47,224.28 919.39,224.11 923.30,223.99 927.21,223.94" fill="none" stroke="#cc1a22" stroke-width="1" shape-rendering="crispEdges"/>
<g fill="none" stroke="#cc1a22" stroke-width="1" shape-rendering="crispEdges"><rect x="456.5" y="463.5" width="3" height="3"/><rect x="459.5" y="462.5" width="3" height="3"/><rect x="463.5" y="462.5" width="3" height="3"/><rect x="467.5" y="462.5" width="3" height="3"/><rect x="471.5" y="461.5" width="3" height="3"/><rect x="475.5" y="461.5" width="3" height="3"/><rect x="479.5" y="460.5" width="3" height="3"/><rect x="483.5" y="459.5" width="3" height="3"/><rect x="487.5" y="459.5" width="3" height="3"/><rect x="491.5" y="458.5" width="3" height="3"/><rect x="495.5" y="457.5" width="3" height="3"/><rect x="499.5" y="456.5" width="3" height="3"/><rect x="502.5" y="455.5" width="3" height="3"/><rect x="506.5" y="454.5" width="3" height="3"/><rect x="510.5" y="452.5" width="3" height="3"/><rect x="514.5" y="450.5" width="3" height="3"/><rect x="518.5" y="449.5" width="3" height="3"/><rect x="522.5" y="447.5" width="3" height="3"/><rect x="526.5" y="445.5" width="3" height="3"/><rect x="530.5" y="442.5" width="3" height="3"/><rect x="534.5" y="440.5" width="3" height="3"/><rect x="538.5" y="438.5" width="3" height="3"/><rect x="542.5" y="435.5" width="3" height="3"/><rect x="546.5" y="432.5" width="3" height="3"/><rect x="549.5" y="429.5" width="3" height="3"/><rect x="553.5" y="425.5" width="3" height="3"/><rect x="557.5" y="422.5" width="3" height="3"/><rect x="561.5" y="420.5" width="3" height="3"/><rect x="565.5" y="417.5" width="3" height="3"/><rect x="569.5" y="414.5" width="3" height="3"/><rect x="573.5" y="411.5" width="3" height="3"/><rect x="577.5" y="408.5" width="3" height="3"/><rect x="581.5" y="405.5" width="3" height="3"/><rect x="585.5" y="402.5" width="3" height="3"/><rect x="589.5" y="398.5" width="3" height="3"/><rect x="593.5" y="395.5" width="3" height="3"/><rect x="596.5" y="392.5" width="3" height="3"/><rect x="600.5" y="389.5" width="3" height="3"/><rect x="604.5" y="386.5" width="3" height="3"/><rect x="608.5" y="382.5" width="3" height="3"/><rect x="612.5" y="379.5" width="3" height="3"/><rect x="616.5" y="375.5" width="3" height="3"/><rect x="620.5" y="371.5" width="3" height="3"/><rect x="624.5" y="367.5" width="3" height="3"/><rect x="628.5" y="363.5" width="3" height="3"/><rect x="632.5" y="358.5" width="3" height="3"/><rect x="636.5" y="354.5" width="3" height="3"/><rect x="639.5" y="349.5" width="3" height="3"/><rect x="643.5" y="345.5" width="3" height="3"/><rect x="647.5" y="341.5" width="3" height="3"/><rect x="651.5" y="337.5" width="3" height="3"/><rect x="655.5" y="334.5" width="3" height="3"/><rect x="659.5" y="331.5" width="3" height="3"/><rect x="663.5" y="328.5" width="3" height="3"/><rect x="667.5" y="325.5" width="3" height="3"/><rect x="671.5" y="322.5" width="3" height="3"/><rect x="675.5" y="319.5" width="3" height="3"/><rect x="679.5" y="316.5" width="3" height="3"/><rect x="683.5" y="313.5" width="3" height="3"/><rect x="686.5" y="310.5" width="3" height="3"/><rect x="690.5" y="307.5" width="3" height="3"/><rect x="694.5" y="304.5" width="3" height="3"/><rect x="698.5" y="301.5" width="3" height="3"/><rect x="702.5" y="297.5" width="3" height="3"/><rect x="706.5" y="294.5" width="3" height="3"/><rect x="710.5" y="291.5" width="3" height="3"/><rect x="714.5" y="288.5" width="3" height="3"/><rect x="718.5" y="284.5" width="3" height="3"/><rect x="722.5" y="281.5" width="3" height="3"/><rect x="726.5" y="278.5" width="3" height="3"/><rect x="730.5" y="275.5" width="3" height="3"/><rect x="733.5" y="272.5" width="3" height="3"/><rect x="737.5" y="269.5" width="3" height="3"/><rect x="741.5" y="266.5" width="3" height="3"/><rect x="745.5" y="264.5" width="3" height="3"/><rect x="749.5" y="261.5" width="3" height="3"/><rect x="753.5" y="258.5" width="3" height="3"/><rect x="757.5" y="255.5" width="3" height="3"/><rect x="761.5" y="252.5" width="3" height="3"/><rect x="765.5" y="249.5" width="3" height="3"/><rect x="769.5" y="247.5" width="3" height="3"/><rect x="773.5" y="245.5" width="3" height="3"/><rect x="776.5" y="243.5" width="3" height="3"/><rect x="780.5" y="241.5" width="3" height="3"/><rect x="784.5" y="239.5" width="3" height="3"/><rect x="788.5" y="238.5" width="3" height="3"/><rect x="792.5" y="237.5" width="3" height="3"/><rect x="796.5" y="236.5" width="3" height="3"/><rect x="800.5" y="235.5" width="3" height="3"/><rect x="804.5" y="234.5" width="3" height="3"/><rect x="808.5" y="233.5" width="3" height="3"/><rect x="812.5" y="232.5" width="3" height="3"/><rect x="816.5" y="231.5" width="3" height="3"/><rect x="820.5" y="230.5" width="3" height="3"/><rect x="823.5" y="229.5" width="3" height="3"/><rect x="827.5" y="229.5" width="3" height="3"/><rect x="831.5" y="228.5" width="3" height="3"/><rect x="835.5" y="228.5" width="3" height="3"/><rect x="839.5" y="227.5" width="3" height="3"/><rect x="843.5" y="226.5" width="3" height="3"/><rect x="847.5" y="225.5" width="3" height="3"/><rect x="851.5" y="224.5" width="3" height="3"/><rect x="855.5" y="223.5" width="3" height="3"/><rect x="859.5" y="223.5" width="3" height="3"/><rect x="863.5" y="224.5" width="3" height="3"/><rect x="867.5" y="225.5" width="3" height="3"/><rect x="870.5" y="225.5" width="3" height="3"/><rect x="874.5" y="226.5" width="3" height="3"/><rect x="878.5" y="226.5" width="3" height="3"/><rect x="882.5" y="226.5" width="3" height="3"/><rect x="886.5" y="225.5" width="3" height="3"/><rect x="890.5" y="225.5" width="3" height="3"/><rect x="894.5" y="224.5" width="3" height="3"/><rect x="898.5" y="224.5" width="3" height="3"/><rect x="902.5" y="223.5" width="3" height="3"/><rect x="906.5" y="223.5" width="3" height="3"/><rect x="910.5" y="222.5" width="3" height="3"/><rect x="913.5" y="222.5" width="3" height="3"/><rect x="917.5" y="222.5" width="3" height="3"/><rect x="921.5" y="222.5" width="3" height="3"/><rect x="925.5" y="222.5" width="3" height="3"/></g>
<polyline points="460.83,224.94 464.74,222.94 468.66,223.94 472.57,219.62 476.48,225.94 480.40,220.95 484.31,228.93 488.23,224.61 492.14,229.59 496.06,225.61 499.97,229.59 503.88,232.25 507.80,236.91 511.71,233.58 515.63,232.59 519.54,235.25 523.46,229.93 527.37,235.91 531.28,230.92 535.20,236.91 539.11,232.92 543.03,237.91 546.94,233.58 550.86,235.91 554.77,234.58 558.68,235.91 562.60,235.91 566.51,231.92 570.43,236.24 574.34,231.92 578.26,236.91 582.17,232.59 586.08,237.91 590.00,232.92 593.91,238.91 597.83,233.58 601.74,237.91 605.66,234.58 609.57,233.58 613.48,235.91 617.40,229.93 621.31,236.91 625.23,231.92 629.14,236.91 633.06,232.59 636.97,237.91 640.88,233.58 644.80,238.57 648.71,234.58 652.63,237.91 656.54,234.25 660.46,239.24 664.37,235.58 668.28,240.57 672.20,235.58 676.11,240.57 680.03,237.24 683.94,241.23 687.86,237.91 691.77,242.23 695.68,238.24 699.60,243.56 703.51,238.91 707.43,243.56 711.34,238.91 715.26,240.57 719.17,238.91 723.08,239.24 727.00,236.91 730.91,238.91 734.83,234.25 738.74,240.23 742.66,235.25 746.57,239.24 750.48,235.91 754.40,241.23 758.31,236.91 762.23,242.23 766.14,236.91 770.06,242.23 773.97,238.24 777.88,238.24 781.80,238.24 785.71,234.25 789.63,237.24 793.54,232.25 797.46,235.58 801.37,239.24 805.28,230.26 809.20,225.27 813.11,230.26 817.03,226.27 820.94,230.92 824.86,226.27 828.77,229.26 832.68,228.93 836.60,225.27 840.51,228.93 844.43,223.28 848.34,228.26 852.26,224.27 856.17,229.26 860.08,220.28 864.00,230.26 870.46,232.59 878.29,228.60 886.11,223.94 893.94,223.61 901.77,219.29 909.60,223.61 919.39,218.62 926.24,223.61 935.04,219.29 942.87,225.61 950.70,220.28 958.53,225.61 966.36,222.61 974.19,222.61" fill="none" stroke="#2222cc" stroke-width="1" shape-rendering="crispEdges"/>
<g fill="none" stroke="#2222cc" stroke-width="1" shape-rendering="crispEdges"><rect x="459.5" y="223.5" width="3" height="3"/><rect x="463.5" y="221.5" width="3" height="3"/><rect x="467.5" y="222.5" width="3" height="3"/><rect x="471.5" y="218.5" width="3" height="3"/><rect x="474.5" y="224.5" width="3" height="3"/><rect x="478.5" y="219.5" width="3" height="3"/><rect x="482.5" y="227.5" width="3" height="3"/><rect x="486.5" y="223.5" width="3" height="3"/><rect x="490.5" y="228.5" width="3" height="3"/><rect x="494.5" y="224.5" width="3" height="3"/><rect x="498.5" y="228.5" width="3" height="3"/><rect x="502.5" y="230.5" width="3" height="3"/><rect x="506.5" y="235.5" width="3" height="3"/><rect x="510.5" y="232.5" width="3" height="3"/><rect x="514.5" y="231.5" width="3" height="3"/><rect x="518.5" y="233.5" width="3" height="3"/><rect x="521.5" y="228.5" width="3" height="3"/><rect x="525.5" y="234.5" width="3" height="3"/><rect x="529.5" y="229.5" width="3" height="3"/><rect x="533.5" y="235.5" width="3" height="3"/><rect x="537.5" y="231.5" width="3" height="3"/><rect x="541.5" y="236.5" width="3" height="3"/><rect x="545.5" y="232.5" width="3" height="3"/><rect x="549.5" y="234.5" width="3" height="3"/><rect x="553.5" y="233.5" width="3" height="3"/><rect x="557.5" y="234.5" width="3" height="3"/><rect x="561.5" y="234.5" width="3" height="3"/><rect x="565.5" y="230.5" width="3" height="3"/><rect x="568.5" y="234.5" width="3" height="3"/><rect x="572.5" y="230.5" width="3" height="3"/><rect x="576.5" y="235.5" width="3" height="3"/><rect x="580.5" y="231.5" width="3" height="3"/><rect x="584.5" y="236.5" width="3" height="3"/><rect x="588.5" y="231.5" width="3" height="3"/><rect x="592.5" y="237.5" width="3" height="3"/><rect x="596.5" y="232.5" width="3" height="3"/><rect x="600.5" y="236.5" width="3" height="3"/><rect x="604.5" y="233.5" width="3" height="3"/><rect x="608.5" y="232.5" width="3" height="3"/><rect x="611.5" y="234.5" width="3" height="3"/><rect x="615.5" y="228.5" width="3" height="3"/><rect x="619.5" y="235.5" width="3" height="3"/><rect x="623.5" y="230.5" width="3" height="3"/><rect x="627.5" y="235.5" width="3" height="3"/><rect x="631.5" y="231.5" width="3" height="3"/><rect x="635.5" y="236.5" width="3" height="3"/><rect x="639.5" y="232.5" width="3" height="3"/><rect x="643.5" y="237.5" width="3" height="3"/><rect x="647.5" y="233.5" width="3" height="3"/><rect x="651.5" y="236.5" width="3" height="3"/><rect x="655.5" y="232.5" width="3" height="3"/><rect x="658.5" y="237.5" width="3" height="3"/><rect x="662.5" y="234.5" width="3" height="3"/><rect x="666.5" y="239.5" width="3" height="3"/><rect x="670.5" y="234.5" width="3" height="3"/><rect x="674.5" y="239.5" width="3" height="3"/><rect x="678.5" y="235.5" width="3" height="3"/><rect x="682.5" y="239.5" width="3" height="3"/><rect x="686.5" y="236.5" width="3" height="3"/><rect x="690.5" y="240.5" width="3" height="3"/><rect x="694.5" y="236.5" width="3" height="3"/><rect x="698.5" y="242.5" width="3" height="3"/><rect x="702.5" y="237.5" width="3" height="3"/><rect x="705.5" y="242.5" width="3" height="3"/><rect x="709.5" y="237.5" width="3" height="3"/><rect x="713.5" y="239.5" width="3" height="3"/><rect x="717.5" y="237.5" width="3" height="3"/><rect x="721.5" y="237.5" width="3" height="3"/><rect x="725.5" y="235.5" width="3" height="3"/><rect x="729.5" y="237.5" width="3" height="3"/><rect x="733.5" y="232.5" width="3" height="3"/><rect x="737.5" y="238.5" width="3" height="3"/><rect x="741.5" y="233.5" width="3" height="3"/><rect x="745.5" y="237.5" width="3" height="3"/><rect x="748.5" y="234.5" width="3" height="3"/><rect x="752.5" y="239.5" width="3" height="3"/><rect x="756.5" y="235.5" width="3" height="3"/><rect x="760.5" y="240.5" width="3" height="3"/><rect x="764.5" y="235.5" width="3" height="3"/><rect x="768.5" y="240.5" width="3" height="3"/><rect x="772.5" y="236.5" width="3" height="3"/><rect x="776.5" y="236.5" width="3" height="3"/><rect x="780.5" y="236.5" width="3" height="3"/><rect x="784.5" y="232.5" width="3" height="3"/><rect x="788.5" y="235.5" width="3" height="3"/><rect x="792.5" y="230.5" width="3" height="3"/><rect x="795.5" y="234.5" width="3" height="3"/><rect x="799.5" y="237.5" width="3" height="3"/><rect x="803.5" y="228.5" width="3" height="3"/><rect x="807.5" y="223.5" width="3" height="3"/><rect x="811.5" y="228.5" width="3" height="3"/><rect x="815.5" y="224.5" width="3" height="3"/><rect x="819.5" y="229.5" width="3" height="3"/><rect x="823.5" y="224.5" width="3" height="3"/><rect x="827.5" y="227.5" width="3" height="3"/><rect x="831.5" y="227.5" width="3" height="3"/><rect x="835.5" y="223.5" width="3" height="3"/><rect x="839.5" y="227.5" width="3" height="3"/><rect x="842.5" y="221.5" width="3" height="3"/><rect x="846.5" y="226.5" width="3" height="3"/><rect x="850.5" y="222.5" width="3" height="3"/><rect x="854.5" y="227.5" width="3" height="3"/><rect x="858.5" y="218.5" width="3" height="3"/><rect x="862.5" y="228.5" width="3" height="3"/><rect x="868.5" y="231.5" width="3" height="3"/><rect x="876.5" y="227.5" width="3" height="3"/><rect x="884.5" y="222.5" width="3" height="3"/><rect x="892.5" y="222.5" width="3" height="3"/><rect x="900.5" y="217.5" width="3" height="3"/><rect x="908.5" y="222.5" width="3" height="3"/><rect x="917.5" y="217.5" width="3" height="3"/><rect x="924.5" y="222.5" width="3" height="3"/><rect x="933.5" y="217.5" width="3" height="3"/><rect x="941.5" y="224.5" width="3" height="3"/><rect x="949.5" y="218.5" width="3" height="3"/><rect x="957.5" y="224.5" width="3" height="3"/><rect x="964.5" y="221.5" width="3" height="3"/><rect x="972.5" y="221.5" width="3" height="3"/></g></svg>
</body></html>
